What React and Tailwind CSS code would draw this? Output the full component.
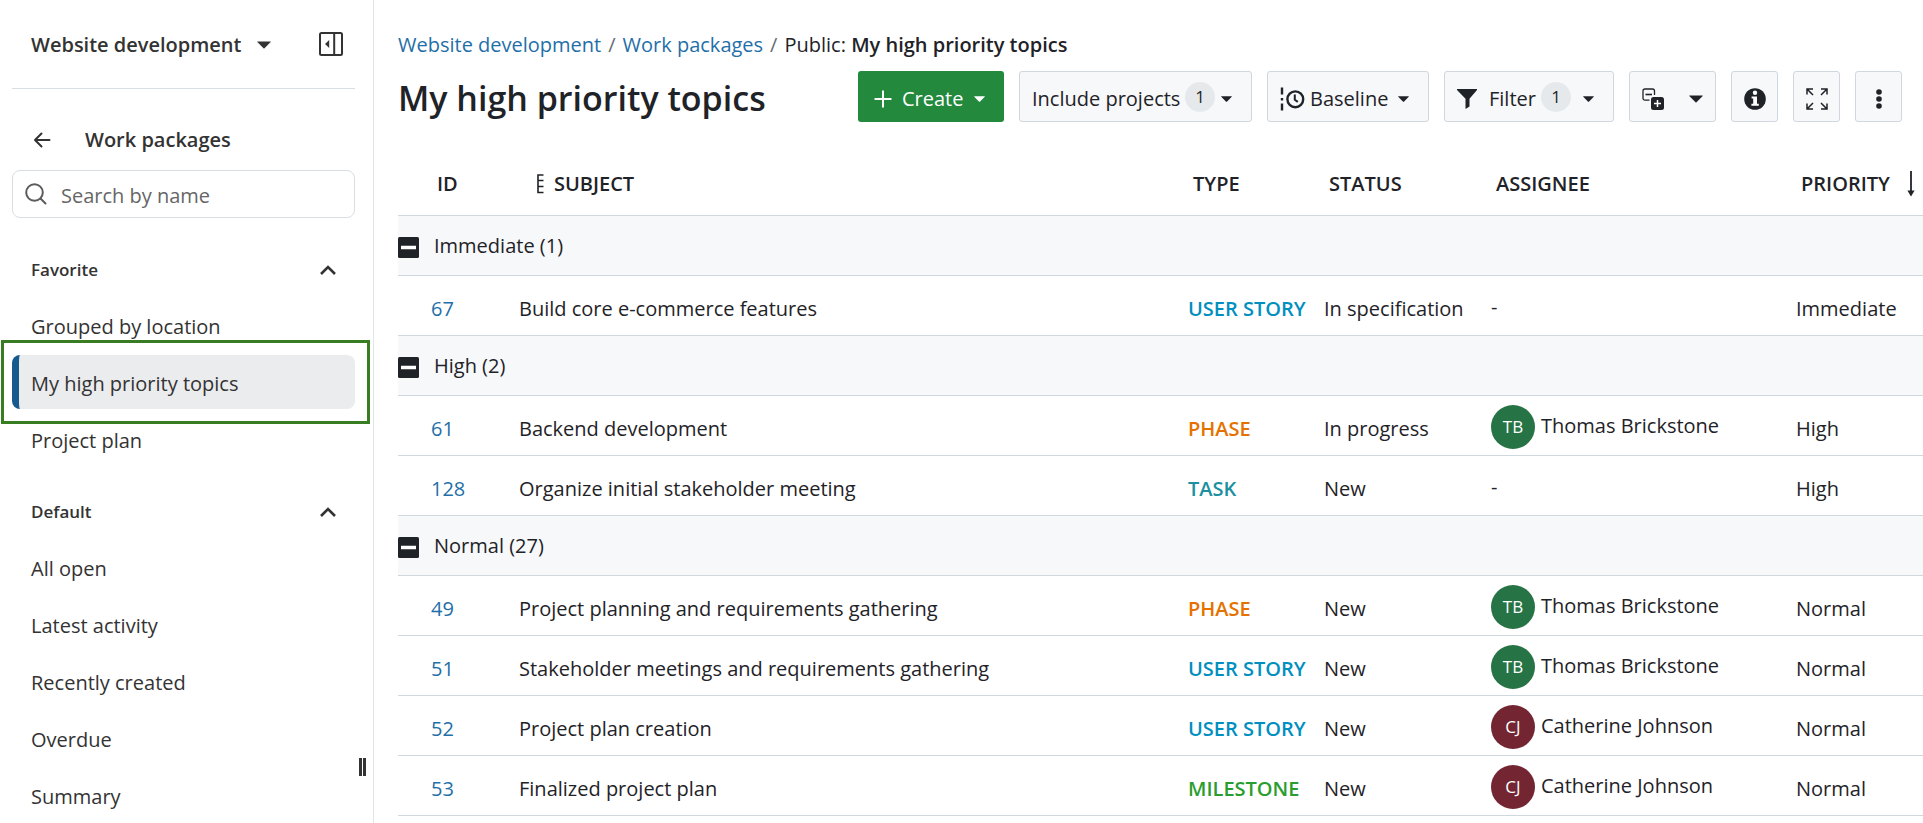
import { useState } from 'react';
import clsx from 'clsx';

const favorites = ['Grouped by location', 'My high priority topics', 'Project plan'];
const defaults = ['All open', 'Latest activity', 'Recently created', 'Overdue', 'Summary'];

const people = {
  TB: { name: 'Thomas Brickstone', color: 'bg-[#267345]' },
  CJ: { name: 'Catherine Johnson', color: 'bg-[#732632]' },
};

const typeColors = {
  'USER STORY': 'text-[#008fbf]',
  PHASE: 'text-[#e57200]',
  TASK: 'text-[#1d90a0]',
  MILESTONE: 'text-[#2a9d2f]',
};

const groups = [
  {
    name: 'Immediate',
    count: 1,
    rows: [
      { id: 67, subject: 'Build core e-commerce features', type: 'USER STORY', status: 'In specification' },
    ],
  },
  {
    name: 'High',
    count: 2,
    rows: [
      { id: 61, subject: 'Backend development', type: 'PHASE', status: 'In progress', assignee: 'TB' },
      { id: 128, subject: 'Organize initial stakeholder meeting', type: 'TASK', status: 'New' },
    ],
  },
  {
    name: 'Normal',
    count: 27,
    rows: [
      { id: 49, subject: 'Project planning and requirements gathering', type: 'PHASE', status: 'New', assignee: 'TB' },
      { id: 51, subject: 'Stakeholder meetings and requirements gathering', type: 'USER STORY', status: 'New', assignee: 'TB' },
      { id: 52, subject: 'Project plan creation', type: 'USER STORY', status: 'New', assignee: 'CJ' },
      { id: 53, subject: 'Finalized project plan', type: 'MILESTONE', status: 'New', assignee: 'CJ' },
    ],
  },
];

// Icons
const Caret = ({ className }) => (
  <svg viewBox="0 0 14 8" className={clsx('shrink-0', className)} fill="currentColor" aria-hidden="true">
    <path d="M0.6 0.4h12.8a.4.4 0 0 1 .3.7L7.5 7.2a.7.7 0 0 1-1 0L.3 1.1a.4.4 0 0 1 .3-.7z" />
  </svg>
);

const SidebarIcon = () => (
  <svg viewBox="0 0 24 24" className="size-6" aria-hidden="true">
    <rect x="1" y="1" width="22" height="22" rx="1.5" fill="none" stroke="currentColor" strokeWidth="2" />
    <path d="M15.2 1v22" stroke="currentColor" strokeWidth="2" />
    <path d="M10.2 8v8l-4.2-4z" fill="currentColor" />
  </svg>
);

const BackIcon = () => (
  <svg viewBox="0 0 18 16" className="h-4 w-[18px]" fill="none" stroke="currentColor" strokeWidth="2" strokeLinecap="round" strokeLinejoin="round" aria-hidden="true">
    <path d="M8.5 1.5L2 8l6.5 6.5M2 8h14.5" />
  </svg>
);

const SearchIcon = () => (
  <svg viewBox="0 0 22 22" className="size-[22px]" fill="none" stroke="currentColor" strokeWidth="2" strokeLinecap="round" aria-hidden="true">
    <circle cx="9.5" cy="9.5" r="8.3" />
    <path d="M15.5 15.5l5 5" />
  </svg>
);

const ChevronUp = () => (
  <svg viewBox="0 0 16 10" className="h-[10px] w-4" fill="none" stroke="currentColor" strokeWidth="2.6" aria-hidden="true">
    <path d="M1 9l7-7 7 7" />
  </svg>
);

const PlusIcon = () => (
  <svg viewBox="0 0 18 18" className="size-[18px] shrink-0" stroke="currentColor" strokeWidth="2" aria-hidden="true">
    <path d="M9 .5v17M.5 9h17" />
  </svg>
);

const BaselineIcon = () => (
  <svg viewBox="0 0 26 26" className="size-[26px] shrink-0" fill="none" stroke="currentColor" strokeWidth="2.4" aria-hidden="true">
    <path d="M3 1.5v7M3 12v2.5M3 17.5v7" />
    <circle cx="16.3" cy="13.3" r="7.9" />
    <path d="M15.8 8.5v5.2l3 2.2" strokeWidth="2" />
  </svg>
);

const FilterIcon = () => (
  <svg viewBox="0 0 20 20" className="size-5 shrink-0" fill="currentColor" aria-hidden="true">
    <path d="M0 0h20v1l-7.5 8.7v7.8L8.5 20V9.700L0 1z" />
  </svg>
);

const HierarchyIcon = () => (
  <svg viewBox="0 0 22 22" className="size-[22px] shrink-0" fill="none" aria-hidden="true">
    <path d="M7.5 12.2H3A2 2 0 0 1 1 10.2V3a2 2 0 0 1 2-2h7.5a2 2 0 0 1 2 2v4" stroke="currentColor" strokeWidth="1.3" />
    <path d="M3.500 6.5h6.5" stroke="currentColor" strokeWidth="1.6" />
    <rect x="9" y="9" width="13" height="13" rx="2.5" fill="currentColor" />
    <path d="M15.5 12v7M12 15.5h7" stroke="white" strokeWidth="1.5" />
  </svg>
);

const InfoIcon = () => (
  <svg viewBox="0 0 22 22" className="size-[22px]" aria-hidden="true">
    <circle cx="11" cy="11" r="10.8" fill="currentColor" />
    <circle cx="11" cy="4.8" r="2.2" fill="white" />
    <path d="M7.6 8.5h5.4v7.3h1.8v2H7.4v-2h1.800v-5.300H7.600z" fill="white" />
  </svg>
);

const FullscreenIcon = () => (
  <svg viewBox="0 0 22 22" className="size-[22px]" fill="none" stroke="currentColor" strokeWidth="1.5" aria-hidden="true">
    <path d="M1 6.5V1h6M1 1l6 6M15 1h6v5.5M21 1l-6 6M1 15.5V21h6M1 21l6-6M21 15.5V21h-6M21 21l-6-6" />
  </svg>
);

const MoreIcon = () => (
  <svg viewBox="0 0 6 20" className="h-5 w-[6px]" fill="currentColor" aria-hidden="true">
    <circle cx="3" cy="3" r="2.8" />
    <circle cx="3" cy="10" r="2.8" />
    <circle cx="3" cy="17" r="2.8" />
  </svg>
);

const HierarchyModeIcon = () => (
  <svg viewBox="0 0 7 20" className="h-5 w-[7px] shrink-0" fill="none" stroke="currentColor" strokeWidth="1.6" aria-hidden="true">
    <path d="M6.5 1H1v17.5h5.5M1 6.5h5.5M1 12.5h5.5" />
  </svg>
);

const SortDownIcon = () => (
  <svg viewBox="0 0 8 26" className="h-[26px] w-2 shrink-0" aria-hidden="true">
    <path d="M4 0v22" stroke="currentColor" strokeWidth="1.8" />
    <path d="M.4 19.5h7.2L4 25.5z" fill="currentColor" />
  </svg>
);

const CollapseIcon = () => (
  <svg viewBox="0 0 21 21" className="size-[21px]" aria-hidden="true">
    <rect width="21" height="21" rx="1.5" fill="currentColor" />
    <path d="M3 10.5h15" stroke="white" strokeWidth="3.5" />
  </svg>
);

const ToolbarButton = ({ className, children, ...props }) => (
  <button
    type="button"
    className={clsx('flex h-[51px] items-center rounded-[3px] border border-[#d0d7de] bg-[#f6f8fa] pt-1', className)}
    {...props}
  >
    {children}
  </button>
);

const Badge = ({ children }) => (
  <span className="mb-1 flex size-[30px] shrink-0 items-center justify-center rounded-full bg-[#e6e9ec] text-[17px]">
    {children}
  </span>
);

const MenuSection = ({ title, items, active }) => (
  <section className="flex flex-col gap-[3px]">
    <button type="button" className="flex h-[54px] items-center justify-between px-[19px] pt-1 text-[17px] font-semibold">
      {title}
      <ChevronUp />
    </button>
    {items.map((item) => (
      <div key={item} className="relative">
        <a
          href="#"
          className={clsx(
            'flex h-[54px] items-center overflow-hidden rounded-lg pt-1',
            item === active ? 'border-l-[7px] border-[#175a8e] bg-[#ebecee] pl-3' : 'pl-[19px]'
          )}
        >
          {item}
        </a>
        {item === active && (
          <span className="pointer-events-none absolute -inset-y-[15px] -right-[15px] -left-[11px] border-3 border-[#397d22]" />
        )}
      </div>
    ))}
  </section>
);

const Sidebar = () => (
  <aside className="relative flex w-[374px] shrink-0 flex-col border-r border-[#e1e4e8] pr-[18px] pl-3 text-[#333]">
    <div className="flex h-[89px] items-center justify-between border-b border-[#d8dee4] pr-3 pl-[19px]">
      <button type="button" className="flex items-center gap-4 pt-[2px] font-semibold">
        Website development
        <Caret className="w-[14px]" />
      </button>
      <button type="button" aria-label="Collapse sidebar">
        <SidebarIcon />
      </button>
    </div>

    <div className="mt-[30px] flex h-10 items-center gap-[34px] pt-[2px] pl-[21px]">
      <button type="button" aria-label="Back">
        <BackIcon />
      </button>
      <span className="font-semibold">Work packages</span>
    </div>

    <label className="mt-[11px] flex h-12 items-center gap-[14px] rounded-lg border border-[#d8dee4] px-3 text-[#5c5c5c]">
      <SearchIcon />
      <input
        type="text"
        aria-label="Search by name"
        placeholder="Search by name"
        className="min-w-0 flex-1 pt-1 outline-none placeholder:text-[#666]"
      />
    </label>

    <nav className="mt-[23px] flex flex-col gap-[17px]">
      <MenuSection title="Favorite" items={favorites} active="My high priority topics" />
      <MenuSection title="Default" items={defaults} />
    </nav>

    <div className="absolute right-[7px] bottom-[47px] flex h-[18px] w-[7px] justify-between">
      <span className="w-[3px] bg-[#333]" />
      <span className="w-[3px] bg-[#333]" />
    </div>
  </aside>
);

const Breadcrumb = () => (
  <nav aria-label="Breadcrumb" className="flex h-7 items-center gap-[7px] pt-[2px]">
    <a href="#" className="text-[#1f6fa8]">Website development</a>
    <span className="text-[#656d76]">/</span>
    <a href="#" className="text-[#1f6fa8]">Work packages</a>
    <span className="text-[#656d76]">/</span>
    <span>
      Public: <b className="font-semibold">My high priority topics</b>
    </span>
  </nav>
);

const Toolbar = () => (
  <div className="flex gap-[15px]">
    <button type="button" className="flex h-[51px] w-[146px] items-center rounded-[3px] bg-[#22893d] pt-1 pr-[19px] pl-4 text-white">
      <PlusIcon />
      <span className="ml-[10px]">Create</span>
      <Caret className="mt-[2px] ml-auto w-[11px]" />
    </button>
    <ToolbarButton className="w-[233px] pr-[19px] pl-3">
      Include projects
      <span className="ml-auto"><Badge>1</Badge></span>
      <Caret className="mt-[2px] ml-[6px] w-[11px]" />
    </ToolbarButton>
    <ToolbarButton className="w-[162px] pr-[19px] pl-[11px]">
      <BaselineIcon />
      <span className="ml-[5px]">Baseline</span>
      <Caret className="mt-[2px] ml-auto w-[11px]" />
    </ToolbarButton>
    <ToolbarButton className="w-[170px] pr-[19px] pl-3">
      <FilterIcon />
      <span className="mr-auto ml-3">Filter</span>
      <Badge>1</Badge>
      <Caret className="mt-[2px] ml-3 w-[11px]" />
    </ToolbarButton>
    <ToolbarButton className="w-[87px] justify-between px-3" aria-label="Hierarchy mode">
      <HierarchyIcon />
      <Caret className="w-[14px]" />
    </ToolbarButton>
    <ToolbarButton className="w-[47px] justify-center" aria-label="Open details">
      <InfoIcon />
    </ToolbarButton>
    <ToolbarButton className="w-[47px] justify-center" aria-label="Full screen">
      <FullscreenIcon />
    </ToolbarButton>
    <ToolbarButton className="w-[47px] justify-center" aria-label="More actions">
      <MoreIcon />
    </ToolbarButton>
  </div>
);

const Assignee = ({ id }) => {
  const person = people[id];
  if (!person) return <span>-</span>;

  return (
    <div className="flex items-center gap-[6px]">
      <span className={clsx('flex size-11 shrink-0 items-center justify-center rounded-full text-[17px] text-white', person.color)}>
        {id}
      </span>
      <span className="pb-[2px]">{person.name}</span>
    </div>
  );
};

const WorkPackagesTable = () => {
  const [collapsed, setCollapsed] = useState([]);

  const toggle = (name) =>
    setCollapsed((prev) => (prev.includes(name) ? prev.filter((n) => n !== name) : [...prev, name]));

  return (
    <table className="mt-[27px] w-full table-fixed border-collapse text-left whitespace-nowrap">
      <colgroup>
        <col className="w-[121px]" />
        <col />
        <col className="w-[136px]" />
        <col className="w-[167px]" />
        <col className="w-[305px]" />
        <col className="w-[127px]" />
      </colgroup>
      <thead>
        <tr className="h-[66px] border-b border-[#d0d7de]">
          <th className="pt-1 pl-[39px] font-semibold">ID</th>
          <th className="pt-1 pl-[18px] font-semibold">
            <span className="flex items-center gap-[10px]">
              <HierarchyModeIcon />
              SUBJECT
            </span>
          </th>
          <th className="pt-1 pl-[5px] font-semibold">TYPE</th>
          <th className="pt-1 pl-[5px] font-semibold">STATUS</th>
          <th className="pt-1 pl-[5px] font-semibold">ASSIGNEE</th>
          <th className="pt-1 pl-[5px] font-semibold">
            <span className="flex items-center justify-between pr-2">
              PRIORITY
              <SortDownIcon />
            </span>
          </th>
        </tr>
      </thead>
      {groups.map((group) => (
        <tbody key={group.name}>
          <tr className="h-[60px] border-b border-[#d0d7de] bg-[#f6f8fa]">
            <td colSpan={6} className="pt-[2px]">
              <div className="flex items-center gap-[15px]">
                <button type="button" className="pt-[2px]" aria-label={`Toggle ${group.name}`} onClick={() => toggle(group.name)}>
                  <CollapseIcon />
                </button>
                {group.name} ({group.count})
              </div>
            </td>
          </tr>
          {!collapsed.includes(group.name) &&
            group.rows.map((row) => (
              <tr key={row.id} className="h-[60px] border-b border-[#d0d7de]">
                <td className="pt-2 pl-[33px]">
                  <a href="#" className="text-[#1f6fa8]">{row.id}</a>
                </td>
                <td className="pt-2">{row.subject}</td>
                <td className={clsx('pt-2 font-semibold', typeColors[row.type])}>{row.type}</td>
                <td className="pt-2">{row.status}</td>
                <td className="pt-1"><Assignee id={row.assignee} /></td>
                <td className="pt-2">{group.name}</td>
              </tr>
            ))}
        </tbody>
      ))}
    </table>
  );
};

export default function App() {
  return (
    <div className="flex min-h-screen overflow-hidden bg-white font-['Open_Sans','Noto_Sans',sans-serif] text-[20px] leading-7 text-[#1f2328]">
      <Sidebar />
      <main className="min-w-0 flex-1 pt-[30px] pl-6">
        <Breadcrumb />
        <div className="mt-[13px] flex items-center justify-between pr-[21px]">
          <h1 className="pt-1 text-[34px] leading-[47px] font-semibold">My high priority topics</h1>
          <Toolbar />
        </div>
        <WorkPackagesTable />
      </main>
    </div>
  );
}
